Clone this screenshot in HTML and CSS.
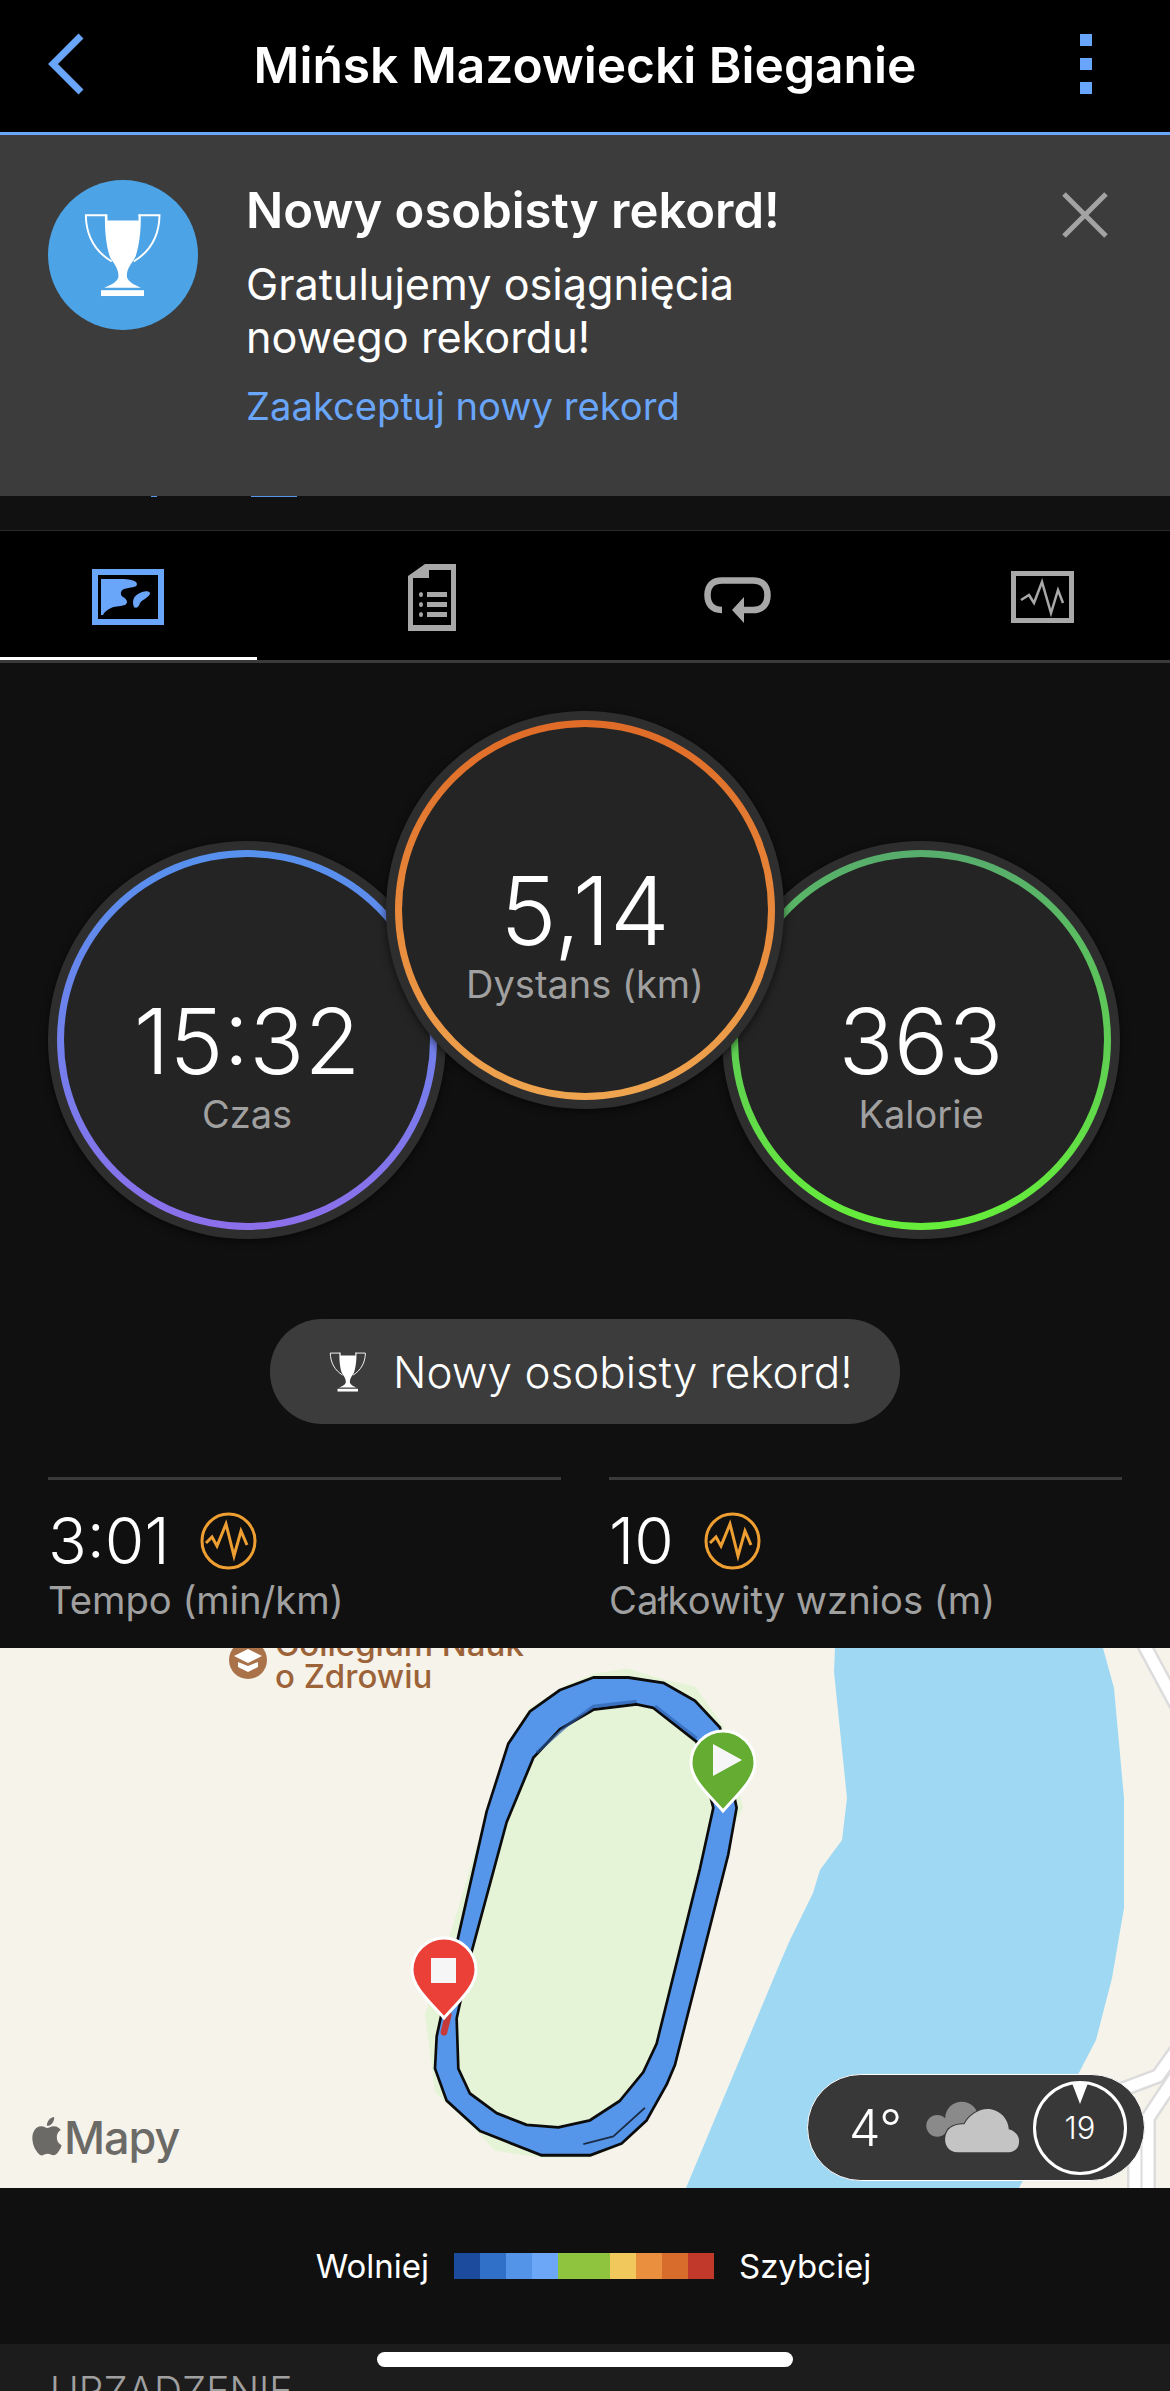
FILE: index.html
```html
<!DOCTYPE html>
<html lang="pl">
<head>
    <meta charset="UTF-8">
    <meta name="viewport" content="width=device-width, initial-scale=1.0">
    <title>Mińsk Mazowiecki Bieganie</title>
    <link rel="stylesheet" href="styles.css">
</head>
<body>
    <!-- shared icons -->
    <svg class="defs" width="0" height="0">
        <symbol id="trophy" viewBox="160 125 240 260">
            <path d="M230 132H165C166 195 195 245 245 275M328 132H393C392 195 363 245 313 275" fill="none" stroke="#fff" stroke-width="6"/>
            <path d="M224 130H232V148H328V130H335V148C335 190 328 235 318 262C305 285 292 295 292 320C292 335 310 345 335 356H222C250 345 266 335 266 320C266 295 250 280 240 262C230 235 224 190 224 148Z" fill="#fff"/>
            <rect x="212" y="364" width="133" height="18" fill="#fff"/>
        </symbol>
        <symbol id="pulse" viewBox="0 0 57 58">
            <ellipse cx="28.5" cy="29" rx="26.5" ry="27" fill="none" stroke="#ef9f32" stroke-width="3"/>
            <path d="M6 31L12 25L17 34L26 12L34 44L41 19L47 33" fill="none" stroke="#ef9f32" stroke-width="3"/>
        </symbol>
    </svg>

    <div class="page">
        <!-- Top bar -->
        <header class="nav">
            <svg class="nav-back" viewBox="0 0 37 62"><path d="M33 3L5 31L33 59" fill="none" stroke="#69a5f8" stroke-width="7"/></svg>
            <h1 class="nav-title">Mińsk Mazowiecki Bieganie</h1>
            <div class="nav-dots"><span></span><span></span><span></span></div>
        </header>

        <!-- Record banner -->
        <section class="banner">
            <div class="banner-badge"><svg class="banner-trophy"><use href="#trophy"/></svg></div>
            <div class="banner-text">
                <h2>Nowy osobisty rekord!</h2>
                <p>Gratulujemy osiągnięcia<br>nowego rekordu!</p>
                <a href="#">Zaakceptuj nowy rekord</a>
            </div>
            <svg class="banner-close" viewBox="0 0 46 46"><path d="M2 2L44 44M44 2L2 44" stroke="#a3a3a3" stroke-width="5"/></svg>
        </section>
        <div class="under-banner"><span class="peek-a"></span><span class="peek-b"></span></div>

        <!-- Tabs -->
        <nav class="tabs">
            <svg class="icon-map" viewBox="0 0 72 56">
                <rect x="3" y="3" width="66" height="50" fill="#000" stroke="#69a5f8" stroke-width="6"/>
                <path d="M9 10H30C35 10 45 11 45 15C45 19 38 18 32 20C28 22 28 26 31 28C36 31 36 34 33 36C27 38 22 37 19 39C15 41 12 43 11 46H9Z" fill="#69a5f8"/>
                <path d="M46 25C50 22 57 21 58 24C58 28 51 30 48 34C47 38 44 40 42 38C40 33 41 28 46 25Z" fill="#69a5f8"/>
            </svg>
            <svg class="icon-doc" viewBox="0 0 49 67">
                <path fill-rule="evenodd" d="M17 0H48V67H0V12ZM21 6V14H5V61H43V6Z" fill="#a8a8a8"/>
                <path d="M19 28H39V33H19ZM19 38H39V43H19ZM19 48H39V53H19Z" fill="#a8a8a8"/>
                <ellipse cx="13" cy="30.500" rx="2" ry="2.500" fill="#a8a8a8"/>
                <ellipse cx="13" cy="40.500" rx="2" ry="2.500" fill="#a8a8a8"/>
                <ellipse cx="13" cy="50.500" rx="2" ry="2.500" fill="#a8a8a8"/>
            </svg>
            <svg class="icon-loop" viewBox="0 0 67 46">
                <path d="M18 33C8 33 3.500 27 3.500 18C3.500 8 9 3.500 18 3.500H49C58 3.500 63.500 8 63.500 18C63.500 28 58 33 49 33H36" fill="none" stroke="#a8a8a8" stroke-width="6.500"/>
                <path d="M40 20L28 33L40 46Z" fill="#a8a8a8"/>
            </svg>
            <svg class="icon-chart" viewBox="0 0 63 52">
                <rect x="2.500" y="2.500" width="58" height="47" fill="none" stroke="#a8a8a8" stroke-width="5"/>
                <path d="M10 29L18 24L23 32L31 11L40 42L47 19L52 32" fill="none" stroke="#a8a8a8" stroke-width="2.500"/>
            </svg>
        </nav>

        <!-- Summary -->
        <section class="summary">
            <div class="rings">
                <div class="ring ring-time">
                    <div class="ring-colour">
                        <div class="ring-face"><strong>15:32</strong><span>Czas</span></div>
                    </div>
                </div>
                <div class="ring ring-distance">
                    <div class="ring-colour">
                        <div class="ring-face"><strong>5,14</strong><span>Dystans (km)</span></div>
                    </div>
                </div>
                <div class="ring ring-calories">
                    <div class="ring-colour">
                        <div class="ring-face"><strong>363</strong><span>Kalorie</span></div>
                    </div>
                </div>
            </div>

            <div class="pill-row">
                <div class="pill"><svg class="pill-trophy"><use href="#trophy"/></svg>Nowy osobisty rekord!</div>
            </div>

            <div class="stats">
                <div class="stat">
                    <div class="stat-value">3:01<svg class="stat-icon"><use href="#pulse"/></svg></div>
                    <div class="stat-label">Tempo (min/km)</div>
                </div>
                <div class="stat">
                    <div class="stat-value">10<svg class="stat-icon"><use href="#pulse"/></svg></div>
                    <div class="stat-label">Całkowity wznios (m)</div>
                </div>
            </div>
        </section>

        <!-- Map -->
        <section class="map">
            <svg class="map-art" viewBox="0 0 1170 540">
                <path d="M835 0L834 24L847 150L842 192L820 222L813 245L790 292L780 315L686 540H1019L1096 392L1112 330L1124 260V150L1114 40L1103 0Z" fill="#9fd8f3"/>
                <g fill="none" stroke="#dcdcdc" stroke-width="16">
                    <path d="M1143 -5L1178 60"/>
                    <path d="M1110 446L1158 428L1178 400"/>
                    <path d="M1178 425L1148 470V548"/>
                    <path d="M1135 480V548"/>
                </g>
                <g fill="none" stroke="#fff" stroke-width="11">
                    <path d="M1143 -5L1178 60"/>
                    <path d="M1110 446L1158 428L1178 400"/>
                    <path d="M1178 425L1148 470V548"/>
                    <path d="M1135 480V548"/>
                </g>
                <g class="route" transform="translate(380 -8) scale(0.3333 0.3571)">
                    <path d="M640 95L740 80L850 110L945 130L1030 240L1090 470L1060 520L890 1190L860 1250L800 1350L725 1415L630 1450L485 1450L345 1430L300 1385L165 1265L135 1050L235 750L320 480L385 285L450 190L560 125Z" fill="#e5f3d6"/>
                    <path fill-rule="evenodd" d="M640 105L745 105L850 120L945 170L1020 245L1070 470L1045 600L885 1190L860 1245L800 1345L725 1410L630 1443L485 1443L300 1375L200 1290L165 1200L170 1110L235 830L320 480L385 290L450 200L540 140ZM640 195L770 180L820 190L950 285L1000 470L960 640L830 1130L790 1210L720 1290L630 1345L535 1365L440 1358L350 1325L270 1270L235 1200L230 1060L270 890L380 510L460 330L540 250Z" fill="#5596ea" stroke="#0c0c0c" stroke-width="8" stroke-linejoin="round"/>
                    <path d="M470 315L560 240L640 186L770 172M825 185L950 275" fill="none" stroke="#2a5aa5" stroke-width="9" opacity="0.6"/>
                    <path d="M610 1412L700 1390L795 1310" fill="none" stroke="#1b2b44" stroke-width="5"/>
                    <path d="M205 1050L192 1098" fill="none" stroke="#c63a3a" stroke-width="20" stroke-linecap="round"/>
                </g>
                <g transform="translate(279 -207)">
                    <path d="M476 322C476 304 461 290 444 290C427 290 412 304 412 322C412 338 428 352 444 370C460 352 476 338 476 322Z" fill="#64ad32" stroke="#fff" stroke-width="3"/>
                    <path d="M463 319L434 303V335Z" fill="#f6f6f6"/>
                </g>
                <path d="M476 322C476 304 461 290 444 290C427 290 412 304 412 322C412 338 428 352 444 370C460 352 476 338 476 322Z" fill="#ea4038" stroke="#fff" stroke-width="3"/>
                <rect x="431" y="310" width="25" height="25" fill="#f6f6f6"/>
                <!-- Apple logo -->
                <path transform="translate(29 469) scale(1.500 1.600)" d="M12.152 6.896c-.948 0-2.415-1.078-3.96-1.04-2.04.027-3.91 1.183-4.961 3.014-2.117 3.675-.546 9.103 1.519 12.09 1.013 1.454 2.208 3.09 3.792 3.039 1.52-.065 2.09-.987 3.935-.987 1.831 0 2.35.987 3.96.948 1.637-.026 2.676-1.48 3.676-2.948 1.156-1.688 1.636-3.325 1.662-3.415-.039-.013-3.182-1.221-3.22-4.857-.026-3.04 2.48-4.494 2.597-4.559-1.429-2.09-3.623-2.324-4.39-2.376-2-.156-3.675 1.09-4.61 1.09zM15.53 3.83c.843-1.012 1.4-2.427 1.245-3.83-1.207.052-2.662.805-3.532 1.818-.78.896-1.454 2.338-1.273 3.714 1.338.104 2.715-.688 3.559-1.701" fill="#6b6a66"/>
                <!-- college marker -->
                <circle cx="248" cy="12" r="19" fill="#a97249"/>
                <path d="M234 8L248 1L262 8L248 15Z" fill="#fff"/>
                <path d="M238 14L248 18L258 14V19L248 24L238 19Z" fill="#fff"/>
            </svg>
            <div class="poi"><span>Collegium Nauk</span><span>o Zdrowiu</span></div>
            <div class="map-credit">Mapy</div>
            <div class="weather">
                <span class="weather-temp">4°</span>
                <svg class="weather-cloud" viewBox="375 110 285 160">
                    <circle cx="408" cy="185" r="33" fill="#8a8a8a"/>
                    <circle cx="482" cy="162" r="50" fill="#8a8a8a"/>
                    <path d="M470 265C440 265 430 240 432 222C434 195 455 178 490 180C505 150 540 130 570 135C600 140 622 165 624 195C645 200 657 218 655 235C653 255 640 265 620 265Z" fill="#c4c4c4" stroke="#383838" stroke-width="6" paint-order="stroke"/>
                </svg>
                <div class="weather-wind">
                    <i></i>19
                </div>
            </div>
        </section>

        <!-- Speed legend -->
        <section class="legend">
            <span>Wolniej</span>
            <div class="legend-bar">
                <i class="c1"></i><i class="c2"></i><i class="c3"></i><i class="c4"></i><i class="c5"></i><i class="c6"></i><i class="c7"></i><i class="c8"></i><i class="c9"></i>
            </div>
            <span>Szybciej</span>
        </section>

        <section class="device">URZĄDZENIE</section>
        <div class="home-bar"></div>
    </div>
</body>
</html>
```

FILE: styles.css
```css
* {
    margin: 0;
    padding: 0;
    box-sizing: border-box;
}

body {
    font-family: Inter, "Liberation Sans", sans-serif;
    background-color: #101010;
    color: #fff;
}

.defs {
    position: absolute;
}

.page {
    position: relative;
    width: 1170px;
    height: 2391px;
    overflow: hidden;
}

/* Top bar */
.nav {
    height: 135px;
    background-color: #000;
    border-bottom: 3px solid #69a5f8;
    display: flex;
    align-items: center;
    justify-content: space-between;
    padding: 0 78px 2px 48px;
}

.nav-back {
    width: 37px;
    height: 62px;
    margin-bottom: 2px;
}

.nav-title {
    font-size: 49.700px;
    font-weight: 600;
    margin-left: 5px;
}

.nav-dots {
    display: flex;
    flex-direction: column;
    gap: 12px;
    margin-bottom: 2px;
}

.nav-dots span {
    width: 12px;
    height: 12px;
    background-color: #69a5f8;
}

/* Banner */
.banner {
    height: 361px;
    background-color: #3c3c3c;
    display: flex;
    padding: 45px 62px 0 48px;
}

.banner-badge {
    width: 150px;
    height: 150px;
    border-radius: 50%;
    background-color: #4ca3e6;
    display: flex;
    align-items: center;
    justify-content: center;
    flex-shrink: 0;
}

.banner-trophy {
    width: 78px;
    height: 84px;
}

.banner-text {
    flex: 1;
    padding-left: 48px;
}

.banner-text h2 {
    font-size: 49px;
    font-weight: 600;
    line-height: 60px;
    margin-top: 1px;
}

.banner-text p {
    font-size: 43.200px;
    line-height: 53px;
    margin-top: 17px;
}

.banner-text a {
    display: block;
    color: #69a5f8;
    font-size: 38.200px;
    line-height: 50px;
    margin-top: 17px;
    text-decoration: none;
}

.banner-close {
    width: 46px;
    height: 46px;
    margin-top: 12px;
}

.under-banner {
    height: 35px;
    background-color: #111;
    border-bottom: 1px solid #2a2a2a;
    display: flex;
    align-items: flex-start;
    padding-left: 151px;
}

.under-banner span {
    height: 1px;
    background-color: #5596ea;
}

.peek-a {
    width: 6px;
}

.peek-b {
    width: 46px;
    margin-left: 94px;
}

/* Tabs */
.tabs {
    position: relative;
    height: 132px;
    background-color: #000;
    border-bottom: 3px solid #3a3a3a;
    display: flex;
    align-items: center;
    justify-content: space-between;
    padding: 3px 96px 0 92px;
}

.tabs::after {
    content: "";
    position: absolute;
    left: 0;
    top: 126px;
    width: 257px;
    height: 3px;
    background-color: #fff;
}

.icon-map { width: 72px; height: 56px; }
.icon-doc { width: 49px; height: 67px; }
.icon-loop { width: 67px; height: 46px; margin: 6px -4px 0 4px; }
.icon-chart { width: 63px; height: 52px; }

/* Summary */
.summary {
    height: 985px;
}

.rings {
    display: flex;
    padding: 48px 50px 0 48px;
}

.ring {
    width: 398px;
    height: 398px;
    flex-shrink: 0;
    border-radius: 50%;
    background-color: #2e2e2e;
    padding: 9px;
    box-shadow: 0 2px 8px rgba(0, 0, 0, 0.6);
}

.ring-time,
.ring-calories {
    margin-top: 130px;
}

.ring-calories {
    margin-left: -2px;
}

.ring-distance {
    position: relative;
    z-index: 1;
    margin: 0 -60px;
}

.ring-colour {
    height: 100%;
    border-radius: 50%;
    padding: 7px;
}

.ring-time .ring-colour {
    background: linear-gradient(#5691ee, #8c6fea);
}

.ring-distance .ring-colour {
    background: linear-gradient(#df6b27, #efa54f);
}

.ring-calories .ring-colour {
    background: linear-gradient(#57ad6d, #66ee3a);
}

.ring-face {
    height: 100%;
    border-radius: 50%;
    background-color: #242424;
    display: flex;
    flex-direction: column;
    align-items: center;
    justify-content: center;
    padding-top: 48px;
}

.ring-face strong {
    font-size: 91px;
    font-weight: 300;
    line-height: 100px;
}

.ring-distance .ring-face strong {
    font-size: 95px;
}

.ring-face span {
    font-size: 38px;
    line-height: 46px;
    color: #a0a0a0;
}

.pill-row {
    display: flex;
    justify-content: center;
    margin-top: 80px;
}

.pill {
    height: 105px;
    width: 630px;
    border-radius: 52px;
    background-color: #3c3c3c;
    display: flex;
    align-items: center;
    padding-left: 59px;
    gap: 26px;
    font-size: 44px;
    font-weight: 300;
}

.pill-trophy {
    width: 38px;
    height: 40px;
}

.stats {
    display: grid;
    grid-template-columns: 513px 513px;
    gap: 48px;
    padding: 53px 48px 0;
}

.stat {
    border-top: 3px solid #3a3a3a;
    padding-top: 26px;
}

.stat-value {
    display: flex;
    align-items: center;
    gap: 30px;
    font-size: 64px;
    font-weight: 300;
    line-height: 70px;
}

.stat-icon {
    width: 57px;
    height: 58px;
}

.stat-label {
    font-size: 38.200px;
    line-height: 46px;
    color: #a0a0a0;
    margin-top: 1px;
}

/* Map */
.map {
    position: relative;
    height: 540px;
    background-color: #f6f3eb;
    overflow: hidden;
}

.map-art {
    position: absolute;
    left: 0;
    top: 0;
    width: 1170px;
    height: 540px;
}

.route {
    filter: blur(0.5px);
}

.poi {
    position: absolute;
    left: 275px;
    top: -20px;
    display: flex;
    flex-direction: column;
    font-size: 33px;
    font-weight: 500;
    line-height: 32px;
    color: #9c6339;
}

.map-credit {
    position: absolute;
    left: 64px;
    top: 462px;
    font-size: 45px;
    font-weight: 500;
    letter-spacing: -1px;
    color: #6b6a66;
}

.weather {
    position: absolute;
    left: 807px;
    top: 426px;
    width: 338px;
    height: 107px;
    border-radius: 54px;
    background-color: #383838;
    border: 1px solid #fff;
    display: flex;
    align-items: center;
    padding-left: 41px;
    font-weight: 300;
}

.weather-temp {
    font-size: 50px;
    width: 77px;
}

.weather-cloud {
    width: 95px;
    height: 53px;
}

.weather-wind {
    position: relative;
    width: 94px;
    height: 94px;
    margin-left: 12px;
    border: 3px solid #fff;
    border-radius: 50%;
    display: flex;
    align-items: center;
    justify-content: center;
    font-size: 31px;
}

.weather-wind i {
    position: absolute;
    left: 36px;
    top: -1px;
    border-left: 8px solid transparent;
    border-right: 8px solid transparent;
    border-top: 21px solid #fff;
}

/* Legend */
.legend {
    height: 156px;
    display: flex;
    align-items: center;
    justify-content: center;
    gap: 25px;
    font-size: 33px;
    padding: 0 0 1px 17px;
}

.legend-bar {
    display: flex;
    width: 260px;
    height: 26px;
}

.legend-bar i {
    flex: 1;
}

.legend-bar .c1 { background-color: #1c4a9c; }
.legend-bar .c2 { background-color: #3070c8; }
.legend-bar .c3 { background-color: #5394e8; }
.legend-bar .c4 { background-color: #6ca6f7; }
.legend-bar .c5 { background-color: #8fc43e; flex: 2; }
.legend-bar .c6 { background-color: #f0c85c; }
.legend-bar .c7 { background-color: #e98f3e; }
.legend-bar .c8 { background-color: #d86c2c; }
.legend-bar .c9 { background-color: #c0392b; }

.device {
    height: 60px;
    background-color: #1c1c1c;
    padding: 25px 0 0 50px;
    font-size: 39px;
    font-weight: 300;
    color: #a0a0a0;
    line-height: 44px;
}

.home-bar {
    position: absolute;
    left: 377px;
    top: 2352px;
    width: 416px;
    height: 15px;
    border-radius: 8px;
    background-color: #fff;
}
```
